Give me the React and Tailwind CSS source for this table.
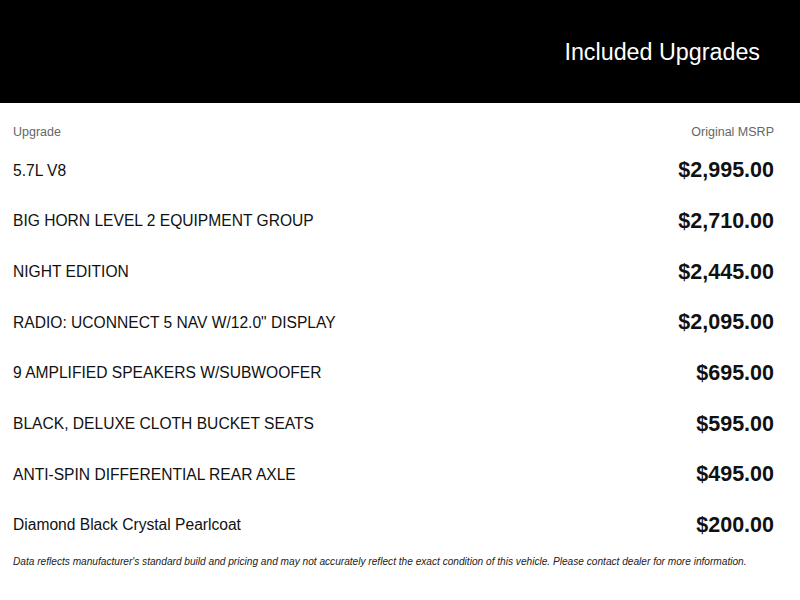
import React from 'react';

const upgrades = [
  { name: '5.7L V8', price: '$2,995.00' },
  { name: 'BIG HORN LEVEL 2 EQUIPMENT GROUP', price: '$2,710.00' },
  { name: 'NIGHT EDITION', price: '$2,445.00' },
  { name: 'RADIO: UCONNECT 5 NAV W/12.0" DISPLAY', price: '$2,095.00' },
  { name: '9 AMPLIFIED SPEAKERS W/SUBWOOFER', price: '$695.00' },
  { name: 'BLACK, DELUXE CLOTH BUCKET SEATS', price: '$595.00' },
  { name: 'ANTI-SPIN DIFFERENTIAL REAR AXLE', price: '$495.00' },
  { name: 'Diamond Black Crystal Pearlcoat', price: '$200.00' },
];

const App = () => {
  return (
    <div className="w-[800px] h-[600px] bg-white font-['Liberation_Sans',Arial,sans-serif] text-[#111]">
      <div className="h-[103px] bg-black flex items-center justify-end pr-[40px] pt-[2px]">
        <h1 className="text-[23.3px] text-white">Included Upgrades</h1>
      </div>
      <div className="px-[13px] pr-[26px] pt-[21px]">
        <div className="flex justify-between text-[12.5px] leading-[16px] text-[#666]">
          <span>Upgrade</span>
          <span>Original MSRP</span>
        </div>
        <div className="mt-[5px]">
          {upgrades.map((u) => (
            <div key={u.name} className="h-[50.7px] flex items-center justify-between">
              <span className="text-[15.6px]">{u.name}</span>
              <span className="text-[21.5px] font-bold">{u.price}</span>
            </div>
          ))}
        </div>
        <p className="mt-[4px] text-[10.15px] leading-[14px] italic text-[#222]">
          Data reflects manufacturer's standard build and pricing and may not accurately reflect the exact condition of this vehicle. Please contact dealer for more information.
        </p>
      </div>
    </div>
  );
};

export default App;
